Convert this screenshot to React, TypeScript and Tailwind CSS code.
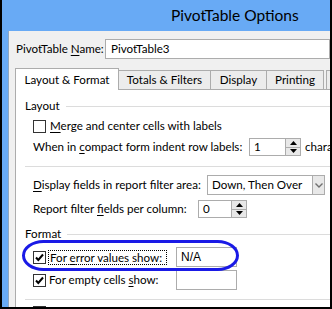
import type { ReactNode } from 'react';

function U({ children }: { children: ReactNode }) {
  return <span className="underline underline-offset-2 decoration-1">{children}</span>;
}

function CheckBox({ checked }: { checked?: boolean }) {
  return (
    <div className="flex h-[13px] w-[13px] shrink-0 items-center justify-center border border-[#333333] bg-white">
      {checked && (
        <svg width="11" height="11" viewBox="0 0 11 11">
          <path d="M2 5.5 L4.3 8 L9 2.5" fill="none" stroke="#000" strokeWidth="2" />
        </svg>
      )}
    </div>
  );
}

function Spinner({ value, width }: { value: string; width: string }) {
  return (
    <div className={`flex h-[18px] ${width} shrink-0 items-stretch border border-[#acacac] bg-white`}>
      <span className="flex flex-1 items-center pl-[4px]">{value}</span>
      <div className="flex w-[15px] flex-col border-l border-[#acacac]">
        <div className="flex flex-1 items-center justify-center border-b border-[#acacac] bg-[#e8e8e8]">
          <svg width="7" height="4" viewBox="0 0 7 4">
            <path d="M0 4 L3.5 0 L7 4 Z" fill="#000" />
          </svg>
        </div>
        <div className="flex flex-1 items-center justify-center bg-[#e8e8e8]">
          <svg width="7" height="4" viewBox="0 0 7 4">
            <path d="M0 0 L3.5 4 L7 0 Z" fill="#000" />
          </svg>
        </div>
      </div>
    </div>
  );
}

function Heading({ label }: { label: string }) {
  return (
    <div className="flex h-[18px] items-center gap-[6px]">
      <span>{label}</span>
      <div className="h-px flex-1 bg-[#dcdcdc]" />
    </div>
  );
}

export default function App() {
  return (
    <div className="h-[309px] w-[332px] overflow-hidden whitespace-nowrap border-b-2 border-l-2 border-r-2 border-black bg-[#68aaf5] font-['Lato',sans-serif] text-[11.6px] text-black">
      <div className="flex h-[31px] items-center pl-[169px] text-[15.5px] leading-none">PivotTable Options</div>

      <div className="ml-[6px] h-[276px] overflow-hidden border-l border-[#8fa6c0] bg-[#f0f0f0] pl-[7px] pt-[8px]">
        <div className="flex h-[20px] items-center">
          <span className="w-[89px] shrink-0">
            PivotTable <U>N</U>ame:
          </span>
          <div className="flex h-[20px] flex-1 items-center border border-[#acacac] bg-white pl-[5px]">PivotTable3</div>
        </div>

        <div className="-ml-px mt-[8px] flex h-[22px] items-end">
          <div className="relative z-10 -mb-px flex h-[22px] w-[104px] shrink-0 items-center justify-center border border-b-0 border-[#acacac] bg-white">
            Layout &amp; Format
          </div>
          <div className="flex h-[19px] w-[92px] shrink-0 items-center justify-center border border-l-0 border-b-0 border-[#acacac] bg-[#ececec]">
            Totals &amp; Filters
          </div>
          <div className="flex h-[19px] w-[56px] shrink-0 items-center justify-center border border-l-0 border-b-0 border-[#acacac] bg-[#ececec]">
            Display
          </div>
          <div className="flex h-[19px] w-[57px] shrink-0 items-center justify-center border border-l-0 border-b-0 border-[#acacac] bg-[#ececec]">
            Printing
          </div>
          <div className="ml-[2px] h-[19px] flex-1 border border-b-0 border-r-0 border-[#acacac] bg-[#ececec]" />
        </div>

        <div className="relative -ml-px h-[230px] border-l border-t border-[#acacac] bg-white pl-[9px] pt-[7px]">
          <Heading label="Layout" />

          <div className="flex h-[22px] items-center pl-[8px]">
            <CheckBox />
            <span className="ml-[4px]">
              <U>M</U>erge and center cells with labels
            </span>
          </div>

          <div className="flex h-[20px] items-center pl-[8px]">
            <span className="w-[216px] shrink-0">
              When in <U>c</U>ompact form indent row labels:
            </span>
            <Spinner value="1" width="w-[52px]" />
            <span className="ml-[4px]">characters</span>
          </div>

          <div className="mt-[9px] h-px bg-[#dcdcdc]" />

          <div className="mt-[8px] flex h-[20px] items-center pl-[8px]">
            <span className="w-[174px] shrink-0">
              <U>D</U>isplay fields in report filter area:
            </span>
            <div className="flex h-[20px] w-[118px] shrink-0 items-stretch border border-[#acacac] bg-white">
              <span className="flex flex-1 items-center pl-[4px]">Down, Then Over</span>
              <div className="flex w-[12px] items-center justify-center border-l border-[#acacac] bg-[#e8e8e8]">
                <svg width="8" height="5" viewBox="0 0 8 5">
                  <path d="M0.5 0.5 L4 4 L7.5 0.5" fill="none" stroke="#707070" strokeWidth="1.4" />
                </svg>
              </div>
            </div>
          </div>

          <div className="mt-[4px] flex h-[20px] items-center pl-[8px]">
            <span className="w-[165px] shrink-0">
              Report filter <U>f</U>ields per column:
            </span>
            <Spinner value="0" width="w-[49px]" />
          </div>

          <div className="mt-[6px]">
            <Heading label="Format" />
          </div>

          <div className="mt-[4px] flex h-[20px] items-center pl-[8px]">
            <CheckBox checked />
            <span className="ml-[2px] block h-[15px] w-[119px] shrink-0 border border-dotted border-black pl-[1px] leading-[13px]">
              For <U>e</U>rror values show:
            </span>
            <div className="ml-[9px] flex h-[20px] w-[61px] shrink-0 items-center border border-[#acacac] bg-white pl-[4px] font-['Liberation_Sans',sans-serif] text-[12px]">
              N/A
            </div>
          </div>

          <div className="mt-[3px] flex h-[20px] items-center pl-[8px]">
            <CheckBox checked />
            <span className="ml-[3px] w-[127px] shrink-0">
              For empty cells <U>s</U>how:
            </span>
            <div className="flex h-[20px] w-[61px] shrink-0 items-center border border-[#acacac] bg-white" />
          </div>

          <div className="mt-[9px] h-px bg-[#dcdcdc]" />

          <div className="mt-[6px] pl-[8px]">
            <CheckBox />
          </div>

          <div className="pointer-events-none absolute left-[6px] top-[150px] h-[31px] w-[217px] rounded-[22px/16px] border-[3px] border-[#1a1ae6]" />
        </div>
      </div>
    </div>
  );
}
